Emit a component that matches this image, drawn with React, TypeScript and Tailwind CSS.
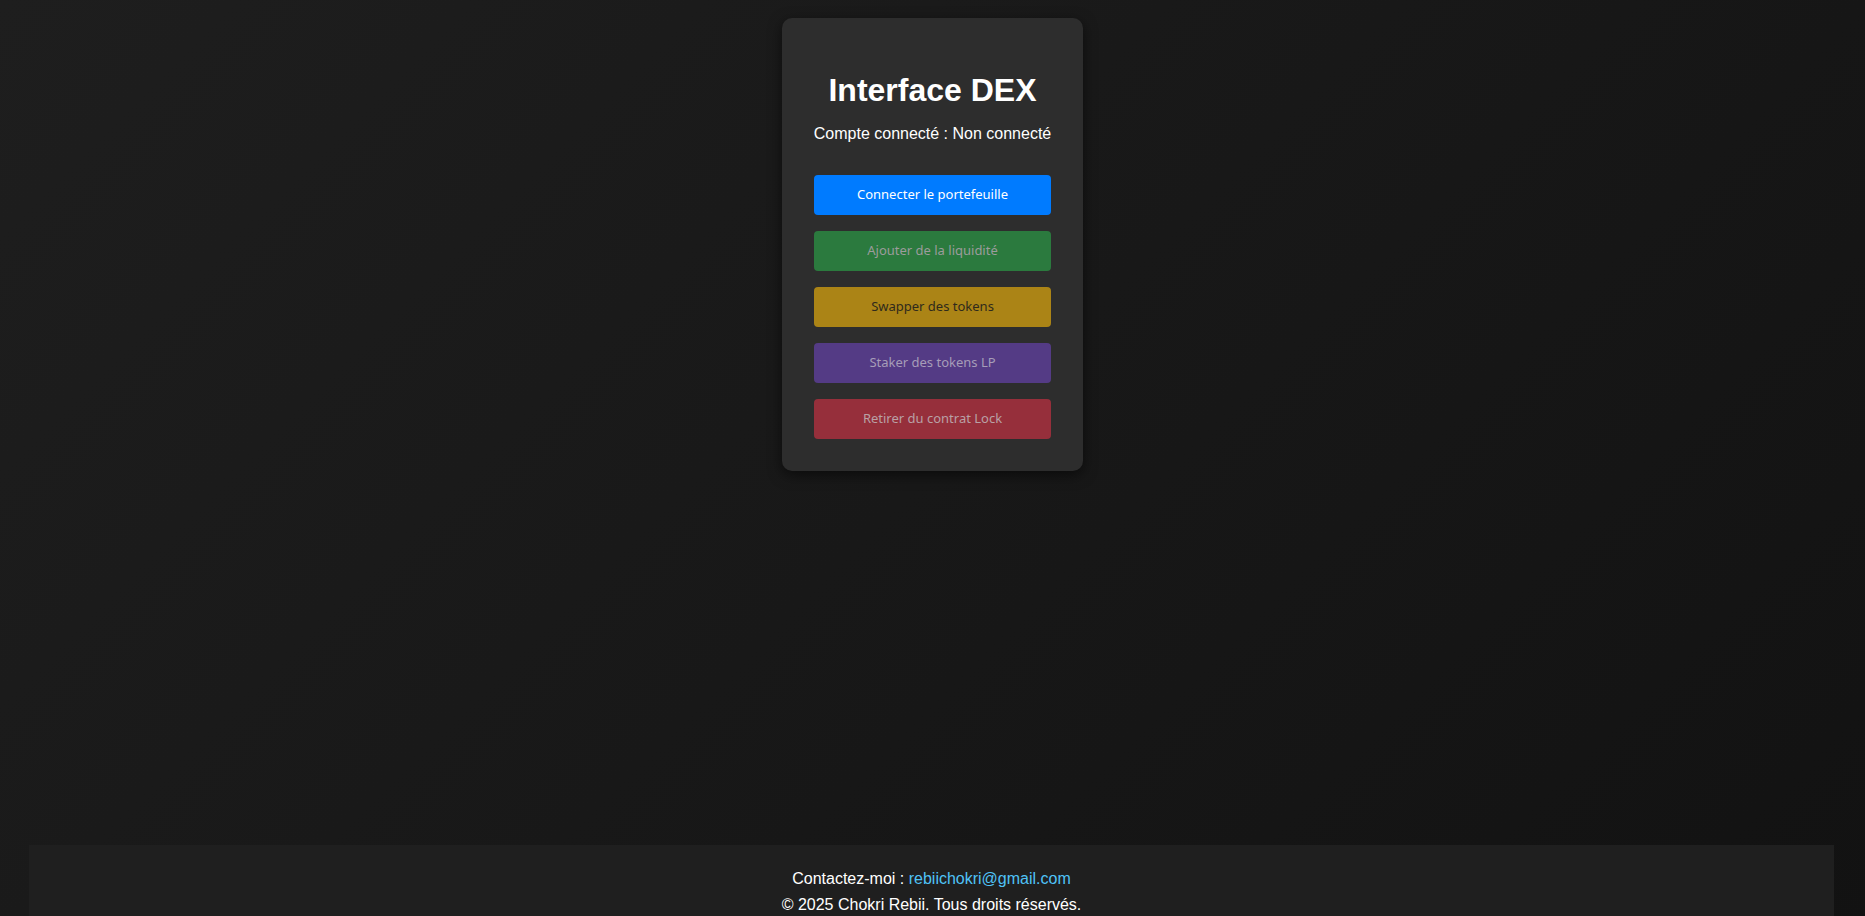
import React from "react";

const buttons = [
  { label: "Connecter le portefeuille", cls: "bg-[#007bff] text-white" },
  { label: "Ajouter de la liquidité", cls: "bg-[#2b7a3e] text-[#9c9c9c]" },
  { label: "Swapper des tokens", cls: "bg-[#ab8416] text-[#2f2a1c]" },
  { label: "Staker des tokens LP", cls: "bg-[#543b85] text-[#a69db8]" },
  { label: "Retirer du contrat Lock", cls: "bg-[#962f3b] text-[#b9a0a5]" },
];

export default function App() {
  return (
    <div className="w-full min-h-screen bg-[linear-gradient(135deg,#1e1e1e,#121212)] font-['Liberation_Sans',Arial,sans-serif] text-white">
      <main className="h-[845px] flex justify-center pt-[18px]">
        <div className="w-[301px] h-[453px] bg-[#2d2d2d] rounded-[10px] shadow-[0_4px_14px_rgba(0,0,0,0.55)] px-8 pt-[54px] pb-[31px] flex flex-col items-center">
          <h1 className="m-0 text-[32px] font-bold leading-[37px] text-center whitespace-nowrap">
            Interface DEX
          </h1>
          <p className="mt-[16px] text-[16px] leading-[18px] text-center whitespace-nowrap">
            Compte connecté : Non connecté
          </p>
          <div className="mt-[32px] w-[237px] flex flex-col gap-4">
            {buttons.map((b) => (
              <button
                key={b.label}
                className={`w-full h-10 rounded-[4px] text-[13px] font-['Noto_Sans',sans-serif] ${b.cls}`}
              >
                {b.label}
              </button>
            ))}
          </div>
        </div>
      </main>
      <footer className="ml-[29px] mr-[31px] bg-[#1f1f1f] pt-[21px] pb-[20px] text-center text-[16px] leading-[26px]">
        <p>
          Contactez-moi : <a className="text-[#4fc3f7]" href="#">rebiichokri@gmail.com</a>
        </p>
        <p>© 2025 Chokri Rebii. Tous droits réservés.</p>
      </footer>
    </div>
  );
}
